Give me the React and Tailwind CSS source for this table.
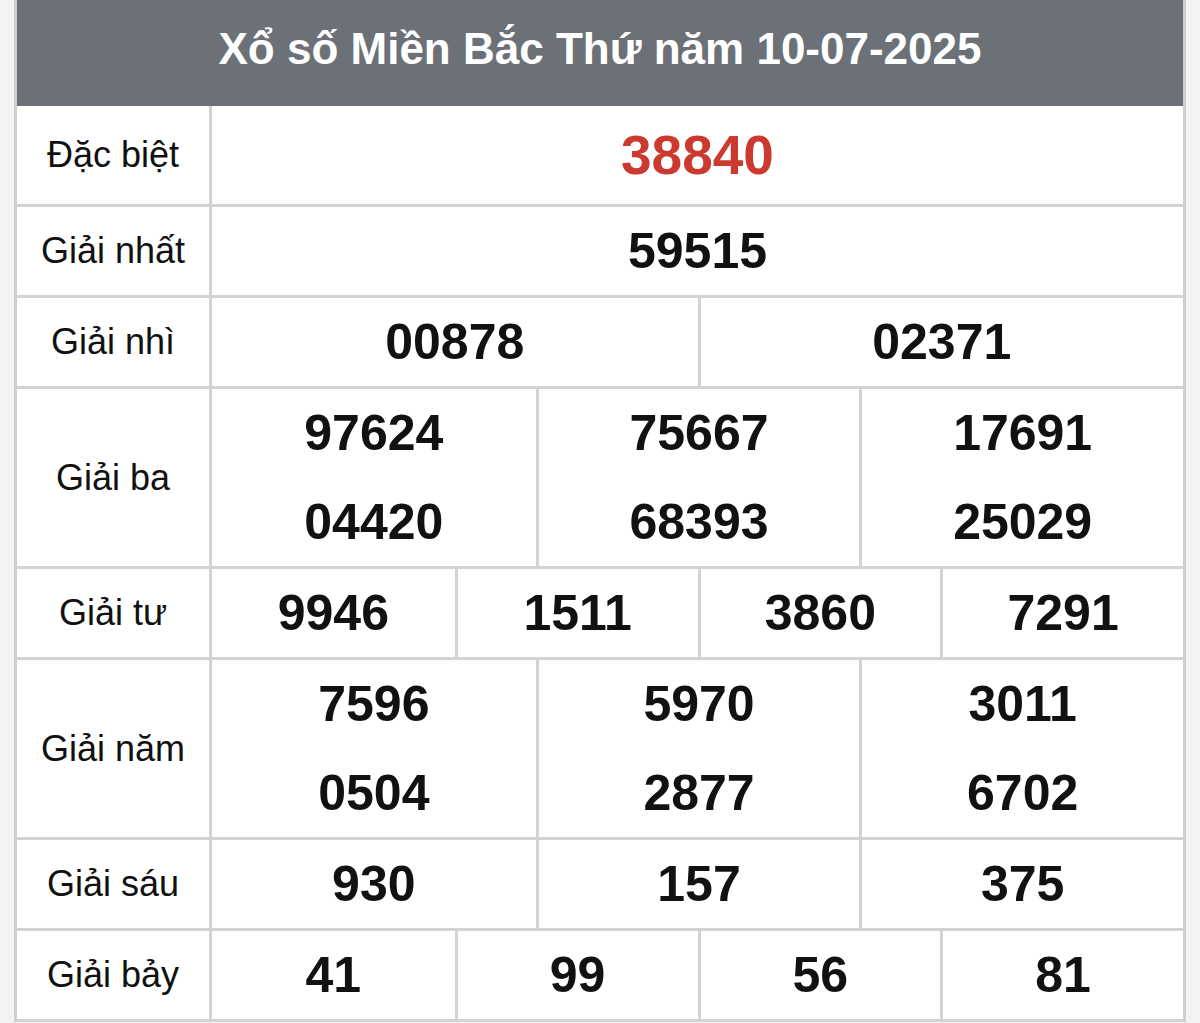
const ROWS = [
  { label: "Đặc biệt", cols: 1, nums: ["38840"], h: "h-[101px]", red: true },
  { label: "Giải nhất", cols: 1, nums: ["59515"], h: "h-[91px]" },
  { label: "Giải nhì", cols: 2, nums: ["00878", "02371"], h: "h-[91px]" },
  { label: "Giải ba", cols: 3, nums: ["97624", "75667", "17691", "04420", "68393", "25029"], h: "h-[180px]" },
  { label: "Giải tư", cols: 4, nums: ["9946", "1511", "3860", "7291"], h: "h-[91px]" },
  { label: "Giải năm", cols: 3, nums: ["7596", "5970", "3011", "0504", "2877", "6702"], h: "h-[180px]" },
  { label: "Giải sáu", cols: 3, nums: ["930", "157", "375"], h: "h-[91px]" },
  { label: "Giải bảy", cols: 4, nums: ["41", "99", "56", "81"], h: "h-[91px]" },
];

const GRID = {
  1: "grid-cols-1",
  2: "grid-cols-2",
  3: "grid-cols-3",
  4: "grid-cols-4",
};

function PrizeRow({ row }) {
  // numbers are given row-major; split into columns so each cell stacks its lines
  const lines = Math.ceil(row.nums.length / row.cols);
  const columns = Array.from({ length: row.cols }, (_, c) =>
    Array.from({ length: lines }, (_, l) => row.nums[l * row.cols + c])
  );

  return (
    <div className={`flex border-b-[3px] border-[#d3d3d3] ${row.h}`}>
      <div className="w-[192px] shrink-0 flex items-center justify-center text-[36px] text-[#111]">
        {row.label}
      </div>
      <div className={`flex-1 grid ${GRID[row.cols]} border-l-[3px] border-[#d3d3d3]`}>
        {columns.map((col, i) => (
          <div
            key={i}
            className={`flex flex-col justify-around ${i > 0 ? "border-l-[3px] border-[#d3d3d3]" : ""}`}
          >
            {col.map((n) => (
              <div
                key={n}
                className={`text-center font-bold leading-none ${row.red ? "text-[55px] text-[#cc3a2f]" : "text-[50px] text-[#111]"}`}
              >
                {n}
              </div>
            ))}
          </div>
        ))}
      </div>
    </div>
  );
}

export default function App() {
  return (
    <div className="h-[1023px] bg-[#f3f3f3] px-[14px] overflow-hidden" style={{ fontFamily: '"Liberation Sans", Arial, sans-serif' }}>
      <div className="bg-white border-x-[3px] border-[#cfcfcf]">
        <div className="h-[106px] bg-[#6b7177] flex items-center justify-center text-white font-bold text-[44px] pb-[8px]">
          Xổ số Miền Bắc Thứ năm 10-07-2025
        </div>
        {ROWS.map((row) => (
          <PrizeRow key={row.label} row={row} />
        ))}
      </div>
    </div>
  );
}
